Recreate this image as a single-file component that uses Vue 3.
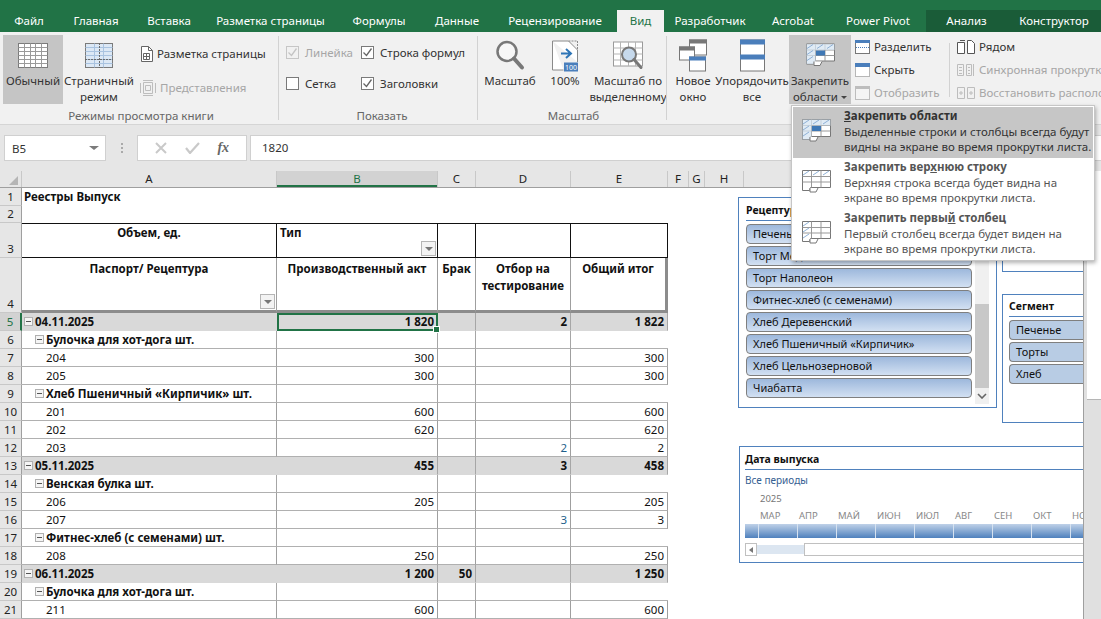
<template>
  <div class="app">
    <!-- Tabs -->
    <div class="tabs">
      <div v-for="t in tabs" :key="t.name" class="tab" :class="{ 'tab--active': t.name === 'Вид', 'tab--ctx': t.ctx }" :style="{ width: t.w + 'px' }">{{ t.name }}</div>
      <div class="tab-fill"></div>
    </div>

    <!-- Ribbon -->
    <div class="ribbon">
      <div class="rgroup g1">
        <div class="rbody">
          <div class="big big--on w60">
            <svg class="ico" width="32" height="27" viewBox="0 0 32 27"><rect x="1.5" y="1.5" width="29" height="24" fill="#fff" stroke="#7b7b7b"/><path :d="gridPath(1.5, 1.5, 29, 24, 5, 6)" stroke="#9a9a9a" fill="none"/></svg>
            <span>Обычный</span>
          </div>
          <div class="big w72">
            <svg class="ico" width="30" height="27" viewBox="0 0 30 27"><rect x="1.5" y="1.5" width="27" height="24" fill="#dce8f5" stroke="#7b7b7b"/><path :d="gridPath(1.5, 1.5, 27, 24, 3, 6)" stroke="#a9c3e0" fill="none"/><path d="M15.5 1v25M1 17.5h28" stroke="#6a6a6a" stroke-dasharray="2 1" fill="none"/></svg>
            <span>Страничный<br>режим</span>
          </div>
          <div class="smalls smalls--two">
            <div class="small">
              <svg width="13" height="16" viewBox="0 0 13 16"><path d="M1.5.5h7l4 4v11h-11z" fill="#fff" stroke="#666"/><path d="M8.5.5v4h4" fill="none" stroke="#666"/><path d="M3.5 7.5h6v6h-6zM6.5 7.5v6M3.5 10.5h6" fill="none" stroke="#666"/></svg>
              <span>Разметка страницы</span>
            </div>
            <div class="small small--off">
              <svg width="16" height="18" viewBox="0 0 16 18"><path d="M3.5 3.5h9v11h-9zM5.5 6.5h5v5h-5zM.5 4v10M15.5 4v10M3 1.5h10M3 16.5h10" fill="none" stroke="#bdbdbd"/></svg>
              <span>Представления</span>
            </div>
          </div>
        </div>
        <div class="rlabel">Режимы просмотра книги</div>
      </div>

      <div class="rgroup g2">
        <div class="rbody checks">
          <div v-for="c in checks" :key="c.label" class="check" :class="{ 'check--off': c.off }">
            <span class="box">
              <svg v-if="c.on" width="11" height="11" viewBox="0 0 11 11"><path d="M1.5 5.5l3 3 5-7" fill="none" :stroke="c.off ? '#c4c4c4' : '#666'" stroke-width="1.3"/></svg>
            </span>
            <span>{{ c.label }}</span>
          </div>
        </div>
        <div class="rlabel">Показать</div>
      </div>

      <div class="rgroup g3">
        <div class="rbody">
          <div class="big w60">
            <svg class="ico" width="30" height="32" viewBox="0 0 30 32"><circle cx="12" cy="12" r="9.5" fill="#f7f7f7" stroke="#787878" stroke-width="2.5"/><path d="M19 19l8 9" stroke="#787878" stroke-width="4" stroke-linecap="round"/></svg>
            <span>Масштаб</span>
          </div>
          <div class="big w40">
            <svg class="ico" width="28" height="32" viewBox="0 0 28 32"><path d="M1.5 1.5h16l9 9v12M1.5 1.5v29h11" fill="#fff" stroke="#8a8a8a"/><path d="M17.5 1.5h9v9" fill="none" stroke="#8a8a8a" stroke-dasharray="2 1"/><path d="M10 14h9M15 9.5l5 4.5-5 4.5" fill="none" stroke="#2e75b6" stroke-width="2"/><rect x="13" y="23" width="14" height="9" fill="#4a7ebb"/><text x="20" y="30.3" class="t100">100</text></svg>
            <span>100%</span>
          </div>
          <div class="big w76">
            <svg class="ico" width="32" height="30" viewBox="0 0 32 30"><rect x="1.5" y="1.5" width="29" height="24" fill="#fff" stroke="#9a9a9a"/><path :d="gridPath(1.5, 1.5, 29, 24, 4, 4)" stroke="#b5b5b5" fill="none"/><circle cx="17" cy="14" r="7" fill="#c6d9ec" stroke="#787878" stroke-width="2"/><path d="M22 19l7 8" stroke="#787878" stroke-width="3" stroke-linecap="round"/></svg>
            <span>Масштаб по<br>выделенному</span>
          </div>
        </div>
        <div class="rlabel">Масштаб</div>
      </div>

      <div class="rgroup g4">
        <div class="rbody">
          <div class="big w44">
            <svg class="ico" width="29" height="32" viewBox="0 0 29 32"><rect x="10.5" y=".5" width="17" height="15" fill="#fff" stroke="#777"/><rect x="10" y="0" width="18" height="4" fill="#777"/><rect x=".5" y="7.5" width="15" height="13" fill="#fff" stroke="#777"/><rect x="0" y="7" width="16" height="4" fill="#777"/><rect x="10.5" y="17.5" width="16" height="14" fill="#fff" stroke="#777"/><rect x="10" y="17" width="17" height="4" fill="#4a7ebb"/></svg>
            <span>Новое<br>окно</span>
          </div>
          <div class="big w74">
            <svg class="ico" width="25" height="32" viewBox="0 0 25 32"><rect x=".5" y=".5" width="24" height="31" fill="#fff" stroke="#777"/><rect x="0" y="0" width="25" height="5" fill="#4a7ebb"/><rect x="0" y="15" width="25" height="5" fill="#4a7ebb"/></svg>
            <span>Упорядочить<br>все</span>
          </div>
          <div class="big big--on w62">
            <svg class="ico" width="29" height="24" viewBox="0 0 29 24"><use href="#frz"/></svg>
            <span>Закрепить<br>области <i class="caret"></i></span>
          </div>
          <div class="smalls smalls--three w95">
            <div class="small">
              <svg width="15" height="14" viewBox="0 0 15 14"><rect x=".5" y=".5" width="14" height="13" fill="#fff" stroke="#777"/><rect width="15" height="3" fill="#4a7ebb"/><path d="M1 7.5h13" stroke="#4a7ebb" stroke-dasharray="1 1"/></svg>
              <span>Разделить</span>
            </div>
            <div class="small">
              <svg width="15" height="14" viewBox="0 0 15 14"><rect x=".5" y=".5" width="14" height="13" fill="#fff" stroke="#777" stroke-dasharray="1 1"/><rect width="15" height="4" fill="#4a7ebb"/></svg>
              <span>Скрыть</span>
            </div>
            <div class="small small--off">
              <svg width="15" height="14" viewBox="0 0 15 14"><rect x=".5" y=".5" width="14" height="13" fill="#f4f4f4" stroke="#bdbdbd"/><rect width="15" height="3" fill="#bdbdbd"/></svg>
              <span>Отобразить</span>
            </div>
          </div>
          <div class="thin"></div>
          <div class="smalls smalls--three smalls--cut">
            <div class="small">
              <svg width="18" height="14" viewBox="0 0 18 14"><path d="M.5 2.5h7v11h-7zM10.5.5h4l3 3v10h-7z" fill="#fff" stroke="#555"/><path d="M3 .5h5" stroke="#555"/></svg>
              <span>Рядом</span>
            </div>
            <div class="small small--off">
              <svg width="18" height="14" viewBox="0 0 18 14"><path d="M.5 1.5h6v11h-6zM9.5 1.5h5v11h-5zM16.5 1v12M2 4.5h3M2 7.5h3M2 10.5h3M11 4.5h2M11 7.5h2M11 10.5h2" fill="none" stroke="#bdbdbd"/></svg>
              <span>Синхронная прокрутка</span>
            </div>
            <div class="small small--off">
              <svg width="18" height="14" viewBox="0 0 18 14"><path d="M.5 1.5h7v11h-7zM10.5 1.5h7v11h-7zM2 7h4M4 5v4M12 7h4M14 5v4" fill="none" stroke="#bdbdbd"/></svg>
              <span>Восстановить расположение окон</span>
            </div>
          </div>
        </div>
      </div>
    </div>

    <!-- Shared freeze-pane icon -->
    <svg width="0" height="0" class="defs">
      <defs>
        <g id="frz">
          <path d="M.5 .5h28v17h-20l-1 3h-7z" fill="#fff" stroke="#777"/>
          <path d="M9.5 .5v17M19 .5v17M.5 6.5h28M.5 12h28" stroke="#999" fill="none"/>
          <path d="M.5 .5h28v6h-19v14h-9z" fill="#d6e4f2" opacity=".75"/>
          <path d="M1 5l6-4M11 5l6-4M21 5l6-4M1 11l6-4M1 17l6-4" stroke="#8fb1d6" fill="none"/>
          <rect x="10" y="7" width="9" height="5" fill="#3f78b5"/>
          <path d="M8 18v4h6l2-4" fill="#fff" stroke="#777"/>
        </g>
        <g id="frz-top">
          <path d="M.5 .5h28v17h-20l-1 3h-7z" fill="#fff" stroke="#777"/>
          <path d="M9.5 .5v17M19 .5v17M.5 6.5h28M.5 12h28" stroke="#999" fill="none"/>
          <path d="M1 5l6-4M11 5l6-4M21 5l6-4" stroke="#8fb1d6" fill="none"/>
          <path d="M8 18v4h6l2-4" fill="#fff" stroke="#777"/>
        </g>
        <g id="frz-col">
          <path d="M.5 .5h28v17h-20l-1 3h-7z" fill="#fff" stroke="#777"/>
          <path d="M9.5 .5v17M19 .5v17M.5 6.5h28M.5 12h28" stroke="#999" fill="none"/>
          <path d="M1 5l6-4M1 11l6-4M1 17l6-4" stroke="#8fb1d6" fill="none"/>
          <path d="M8 18v4h6l2-4" fill="#fff" stroke="#777"/>
        </g>
      </defs>
    </svg>

    <!-- Formula bar -->
    <div class="fbar">
      <div class="namebox"><span>B5</span><i class="caret caret--big"></i></div>
      <div class="fdots"></div>
      <div class="fbtns">
        <svg width="12" height="12" viewBox="0 0 12 12"><path d="M1 1l10 10M11 1L1 11" stroke="#c9c9c9" stroke-width="2"/></svg>
        <svg width="15" height="12" viewBox="0 0 15 12"><path d="M1 6l4 5 9-10" fill="none" stroke="#c9c9c9" stroke-width="2.2"/></svg>
        <span class="fx">fx</span>
      </div>
      <div class="finput">1820</div>
    </div>

    <!-- Sheet -->
    <div class="work">
      <div class="sheet">
        <div class="colhead">
          <div class="corner"><i></i></div>
          <div v-for="c in cols" :key="c.name" class="ch" :class="{ 'ch--sel': c.name === 'B' }" :style="{ width: c.w + 'px' }">{{ c.name }}</div>
          <div class="ch ch--rest"></div>
        </div>

        <div class="row" style="height:18px">
          <div class="rh">1</div><div class="c a bold title">Реестры Выпуск</div>
        </div>
        <div class="row" style="height:17px">
          <div class="rh">2</div>
        </div>
        <div class="row row3" style="height:35px">
          <div class="rh rh--end">3</div>
          <div class="c a bold ctr top">Объем, ед.</div>
          <div class="c b bold top">Тип<span class="filter"><i></i></span></div>
          <div class="c cc"></div><div class="c d"></div><div class="c e"></div>
        </div>
        <div class="row row4" style="height:55px">
          <div class="rh rh--end">4</div>
          <div class="c a bold ctr top">Паспорт/ Рецептура<span class="filter"><i></i></span></div>
          <div class="c b bold ctr top">Производственный акт</div>
          <div class="c cc bold ctr top">Брак</div>
          <div class="c d bold ctr top">Отбор на<br>тестирование</div>
          <div class="c e bold ctr top">Общий итог</div>
        </div>
        <div v-for="r in rows" :key="r.n" class="row data" :class="'row--' + r.kind">
          <div class="rh" :class="{ 'rh--sel': r.n === 5 }">{{ r.n }}</div>
          <div class="c a lbl" :class="{ bold: r.kind !== 'item' }">
            <span v-if="r.kind !== 'item'" class="minus"></span>{{ r.label }}
          </div>
          <div class="c b num" :class="{ cur: r.n === 5 }">{{ r.v[0] }}<i v-if="r.n === 5" class="handle"></i></div>
          <div class="c cc num">{{ r.v[1] }}</div>
          <div class="c d num" :class="{ blue: r.kind === 'item' }">{{ r.v[2] }}</div>
          <div class="c e num">{{ r.v[3] }}</div>
        </div>

        <!-- Slicers float over the sheet -->
        <div class="slicer s1">
          <div class="sl-head">Рецептура</div>
          <div class="sl-body">
            <div class="sl-list">
              <div v-for="b in recipes" :key="b" class="sl-btn">{{ b }}</div>
            </div>
            <div class="sl-scroll"><div class="sl-thumb"></div><svg width="10" height="6" viewBox="0 0 10 6"><path d="M1 1l4 4 4-4" fill="none" stroke="#666" stroke-width="1.6"/></svg></div>
          </div>
        </div>
        <div class="slicer s2"><div class="sl-head">&nbsp;</div><div class="sl-stub"></div></div>
        <div class="slicer s3">
          <div class="sl-head">Сегмент</div>
          <div v-for="b in segments" :key="b" class="sl-btn sl-btn--flat">{{ b }}</div>
        </div>
        <div class="timeline">
          <div class="sl-head tl-head">Дата выпуска</div>
          <div class="tl-all">Все периоды</div>
          <div class="tl-year">2025</div>
          <div class="tl-months"><span v-for="m in months" :key="m">{{ m }}</span></div>
          <div class="tl-bar"><span v-for="m in months" :key="m"></span></div>
          <div class="tl-scroll">
            <div class="tl-left"><i></i></div>
            <div class="tl-track"></div>
            <div class="tl-thumb"></div>
          </div>
        </div>
      </div>
      <div class="vscroll">
        <div class="vs-thumb"></div>
      </div>
    </div>

    <!-- Dropdown menu -->
    <div class="menu">
      <div v-for="(m, i) in menu" :key="m.icon" class="mi" :class="{ 'mi--on': i === 0 }">
        <svg width="29" height="24" viewBox="0 0 29 24"><use :href="'#' + m.icon"/></svg>
        <div class="mi-text">
          <div class="mi-title">{{ m.a }}<u>{{ m.u }}</u>{{ m.b }}</div>
          <div class="mi-desc">{{ m.d1 }}<br>{{ m.d2 }}</div>
        </div>
      </div>
    </div>
  </div>
</template>

<script setup>
const tabs = [
  { name: 'Файл', w: 58 }, { name: 'Главная', w: 76 }, { name: 'Вставка', w: 70 },
  { name: 'Разметка страницы', w: 133 }, { name: 'Формулы', w: 84 }, { name: 'Данные', w: 72 },
  { name: 'Рецензирование', w: 124 }, { name: 'Вид', w: 47 }, { name: 'Разработчик', w: 92 },
  { name: 'Acrobat', w: 74 }, { name: 'Power Pivot', w: 96 },
  { name: 'Анализ', w: 81, ctx: true }, { name: 'Конструктор', w: 94, ctx: true },
]

const checks = [
  { label: 'Линейка', on: true, off: true },
  { label: 'Строка формул', on: true },
  { label: 'Сетка', on: false },
  { label: 'Заголовки', on: true },
]

const cols = [
  { name: 'A', w: 255 }, { name: 'B', w: 161 }, { name: 'C', w: 38 }, { name: 'D', w: 95 },
  { name: 'E', w: 97 }, { name: 'F', w: 21 }, { name: 'G', w: 16 }, { name: 'H', w: 39 },
]

const rows = [
  { n: 5, kind: 'date', label: '04.11.2025', v: ['1 820', '', '2', '1 822'] },
  { n: 6, kind: 'group', label: 'Булочка для хот-дога шт.', v: ['', '', '', ''] },
  { n: 7, kind: 'item', label: '204', v: ['300', '', '', '300'] },
  { n: 8, kind: 'item', label: '205', v: ['300', '', '', '300'] },
  { n: 9, kind: 'group', label: 'Хлеб Пшеничный «Кирпичик» шт.', v: ['', '', '', ''] },
  { n: 10, kind: 'item', label: '201', v: ['600', '', '', '600'] },
  { n: 11, kind: 'item', label: '202', v: ['620', '', '', '620'] },
  { n: 12, kind: 'item', label: '203', v: ['', '', '2', '2'] },
  { n: 13, kind: 'date', label: '05.11.2025', v: ['455', '', '3', '458'] },
  { n: 14, kind: 'group', label: 'Венская булка шт.', v: ['', '', '', ''] },
  { n: 15, kind: 'item', label: '206', v: ['205', '', '', '205'] },
  { n: 16, kind: 'item', label: '207', v: ['', '', '3', '3'] },
  { n: 17, kind: 'group', label: 'Фитнес-хлеб (с семенами) шт.', v: ['', '', '', ''] },
  { n: 18, kind: 'item', label: '208', v: ['250', '', '', '250'] },
  { n: 19, kind: 'date', label: '06.11.2025', v: ['1 200', '50', '', '1 250'] },
  { n: 20, kind: 'group', label: 'Булочка для хот-дога шт.', v: ['', '', '', ''] },
  { n: 21, kind: 'item', label: '211', v: ['600', '', '', '600'] },
]

const recipes = ['Печенье', 'Торт Медовик', 'Торт Наполеон', 'Фитнес-хлеб (с семенами)', 'Хлеб Деревенский', 'Хлеб Пшеничный «Кирпичик»', 'Хлеб Цельнозерновой', 'Чиабатта']
const segments = ['Печенье', 'Торты', 'Хлеб']
const months = ['МАР', 'АПР', 'МАЙ', 'ИЮН', 'ИЮЛ', 'АВГ', 'СЕН', 'ОКТ', 'НОЯ']

const menu = [
  { icon: 'frz', a: '', u: 'З', b: 'акрепить области', d1: 'Выделенные строки и столбцы всегда будут', d2: 'видны на экране во время прокрутки листа.' },
  { icon: 'frz-top', a: 'Закрепить вер', u: 'х', b: 'нюю строку', d1: 'Верхняя строка всегда будет видна на', d2: 'экране во время прокрутки листа.' },
  { icon: 'frz-col', a: 'Закрепить первы', u: 'й', b: ' столбец', d1: 'Первый столбец всегда будет виден на', d2: 'экране во время прокрутки листа.' },
]

function gridPath(x, y, w, h, nx, ny) {
  let d = ''
  for (let i = 1; i < nx; i++) d += `M${x + Math.round(w * i / nx)} ${y}v${h}`
  for (let j = 1; j < ny; j++) d += `M${x} ${y + Math.round(h * j / ny)}h${w}`
  return d
}
</script>

<style>
html, body { margin: 0; overflow: hidden; background: #fff; }
</style>

<style scoped>
.app {
  position: relative;
  width: 1101px;
  height: 619px;
  overflow: hidden;
  font-family: "Noto Sans", "Liberation Sans", sans-serif;
  font-size: 11.5px;
  color: #333;
}
.defs { position: absolute; }

/* tabs */
.tabs { display: flex; height: 32px; background: #217346; padding-top: 10px; box-sizing: border-box; }
.tab { flex: none; text-align: center; color: #fff; font-size: 11.5px; line-height: 21px; }
.tab--active { background: #f1f1f1; color: #217346; }
.tab--ctx { background: #1a5c38; }
.tab-fill { flex: 1; background: #1a5c38; }

/* ribbon */
.ribbon { display: flex; height: 93px; background: #f1f1f1; border-bottom: 1px solid #d5d5d5; box-sizing: border-box; overflow: hidden; }
.rgroup { flex: none; position: relative; padding-top: 3px; box-sizing: border-box; }
.rgroup::after { content: ""; position: absolute; right: 0; top: 4px; bottom: 4px; width: 1px; background: #d2d2d2; }
.g1 { width: 279px; padding-left: 3px; }
.g2 { width: 199px; padding-left: 7px; }
.g3 { width: 189px; padding-left: 2px; }
.g4 { flex: 1; padding-left: 4px; min-width: 0; }
.g4::after { display: none; }
.rbody { display: flex; height: 69px; }
.rlabel { text-align: center; color: #666; font-size: 11.5px; line-height: 16px; margin-top: 4px; }

.big { flex: none; display: flex; flex-direction: column; align-items: center; text-align: center; line-height: 16px; white-space: nowrap; height: 69px; box-sizing: border-box; }
.big .ico { height: 38px; box-sizing: border-box; padding-top: 3px; flex: none; }
.big--on { background: #c5c5c5; }
.w60 { width: 60px; }
.w72 { width: 72px; }
.w40 { width: 50px; }
.w76 { width: 76px; }
.w44 { width: 44px; }
.w74 { width: 74px; }
.w62 { width: 62px; }
.w95 { width: 94px; }

.smalls { display: flex; flex-direction: column; flex: none; }
.smalls--two { margin-left: 5px; padding-top: 9px; gap: 15px; }
.smalls--three { padding-top: 2px; gap: 4px; margin-left: 4px; }
.small { display: flex; align-items: center; gap: 4px; height: 19px; white-space: nowrap; }
.small svg { flex: none; }
.small--off { color: #a6a6a6; }
.thin { width: 1px; height: 54px; background: #d2d2d2; margin: 8px 7px 0 0; flex: none; }
.smalls--cut { margin-left: 0; }

.caret { display: inline-block; width: 0; height: 0; border: 3px solid transparent; border-top: 3px solid #444; border-bottom: 0; vertical-align: middle; }
.caret--big { border-width: 4px 5px 0; border-top-color: #7b7b7b; }

.checks { display: grid; grid-template-columns: 75px 1fr; grid-auto-rows: 19px; row-gap: 12px; padding-top: 8px; height: 61px; }
.check { display: flex; align-items: center; gap: 6px; white-space: nowrap; }
.check--off { color: #a6a6a6; }
.box { width: 11px; height: 11px; border: 1px solid #7a7a7a; background: #fff; display: block; flex: none; }
.box svg { display: block; }
.check--off .box { border-color: #c6c6c6; background: #f1f1f1; }
.t100 { font-size: 7px; fill: #fff; text-anchor: middle; }

/* formula bar */
.fbar { display: flex; align-items: center; height: 46px; background: #e6e6e6; padding: 0 0 0 4px; box-sizing: border-box; }
.namebox { width: 102px; height: 26px; background: #fff; border: 1px solid #d0d0d0; box-sizing: border-box; display: flex; align-items: center; justify-content: space-between; padding: 0 6px 0 7px; }
.fdots { width: 2px; height: 10px; margin: 0 14px 0 15px; border-left: 2px dotted #aaa; box-sizing: border-box; }
.fbtns { width: 110px; height: 26px; background: #fff; border: 1px solid #d0d0d0; box-sizing: border-box; display: flex; align-items: center; justify-content: space-around; padding: 0 8px; }
.fx { font-family: "Liberation Serif", serif; font-style: italic; font-weight: 700; font-size: 14px; color: #666; }
.finput { flex: 1; height: 26px; margin-left: 3px; background: #fff; border: 1px solid #d0d0d0; border-right: 0; box-sizing: border-box; padding-left: 11px; line-height: 24px; }

/* sheet */
.work { display: flex; height: 448px; }
.sheet { flex: 1; position: relative; min-width: 0; overflow: hidden; font-size: 11.5px; color: #111; }
.colhead { display: flex; height: 16px; background: #e6e6e6; border-bottom: 1px solid #9f9f9f; box-sizing: content-box; }
.corner { width: 21px; border-right: 1px solid #c8c8c8; position: relative; flex: none; }
.corner i { position: absolute; right: 3px; bottom: 2px; width: 0; height: 0; border-left: 9px solid transparent; border-bottom: 9px solid #b5b5b5; }
.ch { flex: none; box-sizing: border-box; text-align: center; border-right: 1px solid #c8c8c8; line-height: 15px; color: #222; }
.ch--sel { background: #d2d2d2; color: #217346; box-shadow: inset 0 -2px #217346; }
.ch--rest { flex: 1; border: 0; }

.row { display: flex; box-sizing: border-box; }
.data { height: 18px; }
.rh { width: 22px; flex: none; box-sizing: border-box; background: #e6e6e6; border-right: 1px solid #9f9f9f; border-bottom: 1px solid #c8c8c8; display: flex; align-items: flex-end; justify-content: center; line-height: 16px; color: #222; }
.rh--sel { background: #d2d2d2; color: #217346; border-right: 2px solid #217346; }
.c { flex: none; box-sizing: border-box; position: relative; padding: 0 3px; white-space: nowrap; line-height: 17px; border-bottom: 1px solid #b0b0b0; border-right: 1px solid #9f9f9f; }
.a { width: 255px; }
.b { width: 161px; }
.cc { width: 38px; }
.d { width: 95px; }
.e { width: 97px; }
.bold { font-weight: 700; }
.ctr { text-align: center; }
.top { padding-top: 0; }
.title { border: 0; padding-left: 2px; width: 400px; }

.row3 .c { border-right: 1px solid #111; border-top: 1px solid #111; border-bottom: 1px solid #111; }
.row3 .a { border-left: 0; }
.row4 .c { border-bottom: 3px solid #8c8c8c; border-right: 1px solid #9f9f9f; white-space: normal; padding-top: 2px; }
.row4 .e { border-right: 3px solid #8c8c8c; }
.filter { position: absolute; right: 1px; bottom: 1px; width: 15px; height: 15px; box-sizing: border-box; background: #f3f3f3; border: 1px solid #b5b5b5; display: flex; align-items: center; justify-content: center; }
.filter i { width: 0; height: 0; border-left: 4px solid transparent; border-right: 4px solid transparent; border-top: 4px solid #777; }

.num { text-align: right; }
.lbl { padding-left: 2px; }
.row--date .c { background: #d9d9d9; font-weight: 700; border-bottom-color: #d9d9d9; border-right-color: #a6a6a6; }
.row--date .a { border-right-color: #d9d9d9; }
.row--group .c { border-right-color: #a6a6a6; }
.row--group .a { padding-left: 13px; }
.row--group .e { border-right: 0; }
.row--item .a { padding-left: 24px; }
.blue { color: #1f5f8b; }
.minus { display: inline-block; width: 7px; height: 7px; border: 1px solid #b0b0b0; background: #f5f5f5 linear-gradient(#555, #555) center / 5px 1px no-repeat; margin-right: 2px; vertical-align: 0; }
.cur { outline: 2px solid #217346; outline-offset: -2px; }
.handle { position: absolute; right: -3px; bottom: -3px; width: 5px; height: 5px; background: #217346; border: 1px solid #fff; z-index: 1; }

/* slicers */
.slicer, .timeline { position: absolute; background: #fff; border: 1px solid #4f81bd; box-sizing: border-box; }
.s1 { left: 738px; top: 26px; width: 259px; height: 211px; padding: 5px 7px; }
.s2 { left: 1002px; top: 26px; width: 100px; height: 75px; }
.s3 { left: 1002px; top: 123px; width: 100px; height: 129px; padding: 4px 0 0 6px; }
.sl-head { font-weight: 700; font-size: 10.5px; color: #111; height: 17px; line-height: 14px; border-bottom: 1px solid #4f81bd; margin-bottom: 3px; }
.sl-body { display: flex; gap: 3px; }
.sl-list { flex: 1; min-width: 0; display: flex; flex-direction: column; gap: 2px; }
.sl-btn { height: 20px; box-sizing: border-box; border: 1px solid #7f7f7f; border-radius: 4px; background: linear-gradient(#9db8dc, #d2e0f2); padding-left: 6px; line-height: 17px; font-size: 11px; color: #111; white-space: nowrap; }
.sl-btn--flat { background: #b8cce4; margin-bottom: 2px; border-right: 0; border-radius: 4px 0 0 4px; }
.sl-scroll { width: 14px; height: 180px; background: #f0f0f0; display: flex; flex-direction: column; align-items: center; justify-content: flex-end; flex: none; padding-bottom: 5px; box-sizing: border-box; }
.sl-thumb { width: 14px; height: 84px; background: #c8c8c8; margin-bottom: 5px; }
.timeline { left: 739px; top: 275px; width: 360px; height: 117px; padding: 5px; }
.tl-head { height: 17px; margin-bottom: 4px; }
.tl-all { color: #366092; font-size: 10px; line-height: 12px; }
.tl-year { color: #777; font-size: 9.5px; line-height: 12px; margin: 7px 0 0 15px; }
.tl-months { display: flex; color: #888; font-size: 9.5px; margin: 5px 0 0 15px; line-height: 12px; }
.tl-months span { width: 39px; flex: none; }
.tl-bar { display: flex; height: 14px; margin-top: 2px; background: linear-gradient(#bfd1e8, #4f81bd); padding-left: 13px; }
.tl-bar span { width: 39px; flex: none; box-sizing: border-box; border-left: 1px solid #d6e2f0; }
.tl-scroll { display: flex; height: 13px; margin-top: 5px; }
.tl-left { width: 12px; border: 1px solid #c0c0c0; box-sizing: border-box; display: flex; align-items: center; justify-content: center; flex: none; }
.tl-left i { width: 0; height: 0; border-top: 3px solid transparent; border-bottom: 3px solid transparent; border-right: 4px solid #777; }
.tl-track { width: 47px; flex: none; background: #dce6f1; margin: 2px 0; }
.tl-thumb { flex: 1; border: 1px solid #c0c0c0; background: #fff; box-sizing: border-box; }

.vscroll { width: 18px; flex: none; background: #e0e0e0; border-left: 1px solid #9f9f9f; box-sizing: border-box; padding-left: 3px; }
.vs-thumb { height: 228px; background: #fff; border-bottom: 1px solid #b5b5b5; }

/* dropdown */
.menu { position: absolute; left: 791px; top: 105px; width: 304px; height: 156px; background: #fff; border: 1px solid #c6c6c6; box-sizing: border-box; box-shadow: 1px 2px 4px rgba(0, 0, 0, .3); padding: 1px; font-size: 11.5px; color: #555; }
.mi { display: flex; height: 51px; box-sizing: border-box; padding-left: 9px; gap: 13px; }
.mi svg { margin-top: 12px; flex: none; }
.mi-title { font-weight: 700; line-height: 17px; white-space: nowrap; }
.mi-desc { line-height: 15px; white-space: nowrap; }
.mi--on { background: #c6c6c6; color: #333; }
</style>
